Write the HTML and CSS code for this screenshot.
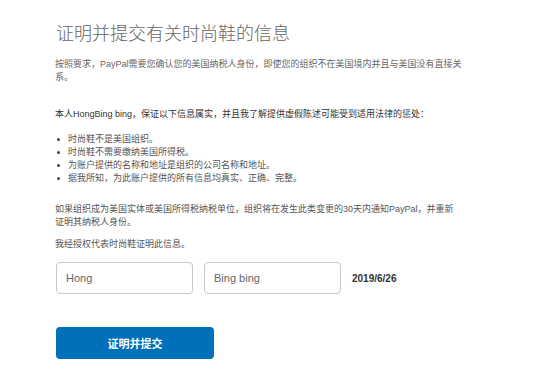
FILE: index.html
```html
<!DOCTYPE html>
<html lang="zh-CN">
<head>
<meta charset="utf-8">
<title>证明并提交有关时尚鞋的信息</title>
<link rel="stylesheet" href="styles.css">
</head>
<body>
<main class="page">
  <h1 class="title">证明并提交有关时尚鞋的信息</h1>
  <p class="intro">按照要求，PayPal需要您确认您的美国纳税人身份，即使您的组织不在美国境内并且与美国没有直接关系。</p>
  <p class="statement">本人HongBing bing，保证以下信息属实，并且我了解提供虚假陈述可能受到适用法律的惩处：</p>
  <ul class="terms">
    <li>时尚鞋不是美国组织。</li>
    <li>时尚鞋不需要缴纳美国所得税。</li>
    <li>为账户提供的名称和地址是组织的公司名称和地址。</li>
    <li>据我所知，为此账户提供的所有信息均真实、正确、完整。</li>
  </ul>
  <p class="note">如果组织成为美国实体或美国所得税纳税单位，组织将在发生此类变更的30天内通知PayPal，并重新<br>证明其纳税人身份。</p>
  <p class="auth">我经授权代表时尚鞋证明此信息。</p>
  <div class="sign-row">
    <input class="field" type="text" value="Hong">
    <input class="field" type="text" value="Bing bing">
    <span class="date">2019/6/26</span>
  </div>
  <button class="submit" type="button">证明并提交</button>
</main>
</body>
</html>
```

FILE: styles.css
```css
html, body {
  margin: 0;
  padding: 0;
  background: #ffffff;
}

body {
  font-family: "Liberation Sans", "Noto Sans CJK SC", sans-serif;
  color: #555555;
}

.page {
  padding: 22px 0 0 55px;
  width: 410px;
  display: flex;
  flex-direction: column;
  align-items: flex-start;
}

.title {
  margin: 0 0 16px 1px;
  font-family: "Noto Sans CJK SC", sans-serif;
  font-size: 18px;
  line-height: 20px;
  font-weight: 300;
  color: #666666;
}

.intro,
.statement,
.note,
.auth {
  margin: 0;
  font-size: 9px;
  line-height: 13px;
}

.intro {
  color: #666666;
}

.statement {
  margin-top: 24px;
  color: #333333;
}

.terms {
  list-style: none;
  margin: 12px 0 0 0;
  padding: 0;
  font-size: 9px;
  line-height: 13px;
  color: #555555;
}

.terms li {
  display: flex;
  align-items: center;
  gap: 8px;
  padding-left: 2px;
}

.terms li::before {
  content: "";
  width: 3px;
  height: 3px;
  border-radius: 50%;
  background: #444444;
  flex: none;
}

.note {
  margin-top: 18px;
}

.auth {
  margin-top: 9px;
}

.sign-row {
  margin-top: 11px;
  display: flex;
  align-items: center;
  gap: 11px;
  margin-left: 1px;
}

.field {
  box-sizing: border-box;
  width: 137px;
  height: 32px;
  margin: 0;
  padding: 0 9px;
  border: 1px solid #c6c9cc;
  border-radius: 4px;
  background: #ffffff;
  font-family: "Liberation Sans", sans-serif;
  font-size: 11px;
  color: #666666;
  outline: none;
}

.date {
  font-size: 10px;
  font-weight: bold;
  color: #333333;
}

.submit {
  margin: 33px 0 0 1px;
  box-sizing: border-box;
  width: 158px;
  height: 32px;
  border: none;
  border-radius: 4px;
  background: #0070ba;
  color: #ffffff;
  font-family: "Liberation Sans", "Noto Sans CJK SC", sans-serif;
  font-size: 11px;
  font-weight: bold;
  cursor: pointer;
}
```
